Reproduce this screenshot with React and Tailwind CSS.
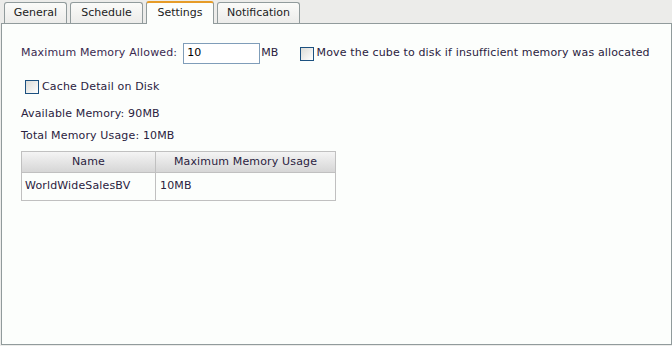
export default function App() {
  const font = { fontFamily: "Tahoma, 'DejaVu Sans', sans-serif" };
  const tabs = [
    { label: "General", w: "w-[63px]" },
    { label: "Schedule", w: "w-[73px]" },
    { label: "Settings", w: "w-[68px]", active: true },
    { label: "Notification", w: "w-[83px]" },
  ];
  const Check = () => (
    <span className="inline-block w-[14px] h-[14px] border border-[#1c5180] bg-gradient-to-br from-[#dcdcd7] to-[#ffffff] box-border shrink-0" />
  );
  return (
    <div className="w-[672px] h-[346px] bg-[#ececea] text-[11px] text-[#222] flex flex-col" style={font}>
      <div className="flex items-end h-[23px] pl-[4px] gap-[3px] relative z-10">
        {tabs.map((t) =>
          t.active ? (
            <div key={t.label} className={`${t.w} h-[23px] bg-[#fcfefc] border border-[#919b9c] border-b-0 border-t-[2px] border-t-[#e69c28] rounded-t-[3px] flex items-center justify-center mb-[-1px]`}>
              {t.label}
            </div>
          ) : (
            <div key={t.label} className={`${t.w} h-[21px] bg-gradient-to-b from-[#fbfbf9] to-[#ececea] border border-[#919b9c] border-b-0 rounded-t-[3px] flex items-center justify-center`}>
              {t.label}
            </div>
          )
        )}
      </div>
      <div className="flex-1 bg-[#fcfefc] border border-[#919b9c] ml-[1px] mb-[1px] pl-[19px] pt-[19px] text-[#2a2240] tracking-[0.15px]">
        <div className="flex items-center h-[21px]">
          <span className="text-[#3a2a50]">Maximum Memory Allowed:</span>
          <div className="ml-[6px] w-[77px] h-[21px] border border-[#7f9db9] bg-white flex items-center pl-[3px] text-black">10</div>
          <span className="ml-[1px]">MB</span>
          <div className="ml-[21px] flex items-center gap-[3px]">
            <Check />
            <span>Move the cube to disk if insufficient memory was allocated</span>
          </div>
        </div>
        <div className="flex items-center gap-[3px] mt-[15px] ml-[4px] h-[16px]">
          <Check />
          <span>Cache Detail on Disk</span>
        </div>
        <div className="mt-[11px] h-[16px] flex items-center">Available Memory: 90MB</div>
        <div className="mt-[6px] h-[16px] flex items-center">Total Memory Usage: 10MB</div>
        <div className="mt-[7px] w-[315px] border border-[#c0c0c0] grid grid-cols-[134px_1fr]">
          <div className="h-[21px] bg-gradient-to-b from-[#f4f4f4] to-[#d6d6d6] border-r border-b border-[#c0c0c0] flex items-center justify-center text-[#2a2240]">Name</div>
          <div className="h-[21px] bg-gradient-to-b from-[#f4f4f4] to-[#d6d6d6] border-b border-[#c0c0c0] flex items-center justify-center text-[#2a2240]">Maximum Memory Usage</div>
          <div className="h-[27px] border-r border-[#c0c0c0] flex items-center pl-[3px]">WorldWideSalesBV</div>
          <div className="h-[27px] flex items-center pl-[4px]">10MB</div>
        </div>
      </div>
    </div>
  );
}
